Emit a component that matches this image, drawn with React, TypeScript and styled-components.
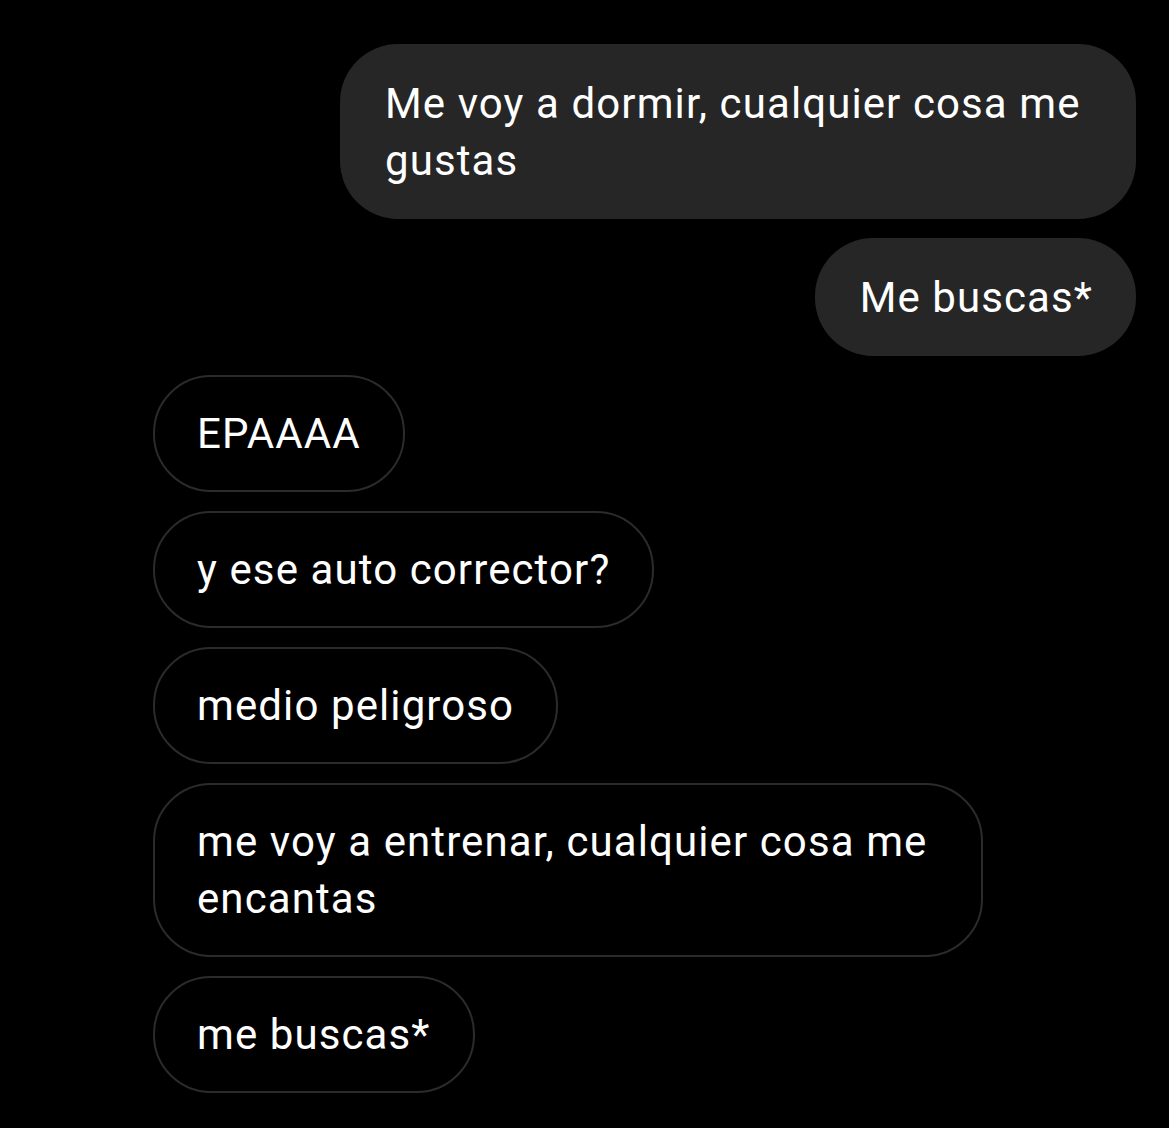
import styled, { createGlobalStyle } from 'styled-components'

const GlobalStyle = createGlobalStyle`
  html, body {
    margin: 0;
    padding: 0;
    background: #000;
  }

  body {
    font-family: Roboto, 'Liberation Sans', Arial, sans-serif;
    color: #fff;
    -webkit-font-smoothing: antialiased;
  }
`

type Message = {
  id: number
  text: string
  mine: boolean
}

const messages: Message[] = [
  { id: 1, text: 'Me voy a dormir, cualquier cosa me gustas', mine: true },
  { id: 2, text: 'Me buscas*', mine: true },
  { id: 3, text: 'EPAAAA', mine: false },
  { id: 4, text: 'y ese auto corrector?', mine: false },
  { id: 5, text: 'medio peligroso', mine: false },
  { id: 6, text: 'me voy a entrenar, cualquier cosa me encantas', mine: false },
  { id: 7, text: 'me buscas*', mine: false },
]

export default function App() {
  return (
    <>
      <GlobalStyle />
      <Thread>
        {messages.map(({ id, text, mine }) => (
          <Bubble key={id} mine={mine}>
            {text}
          </Bubble>
        ))}
      </Thread>
    </>
  )
}

const Thread = styled.div`
  width: 1169px;
  min-height: 1128px;
  box-sizing: border-box;
  padding: 44px 33px 0 153px;
  display: flex;
  flex-direction: column;
  gap: 19px;
  background: #000;
`

const Bubble = styled.div<{ mine: boolean }>`
  box-sizing: border-box;
  align-self: ${props => (props.mine ? 'flex-end' : 'flex-start')};
  max-width: ${props => (props.mine ? '796px' : '830px')};
  padding: ${props => (props.mine ? '31px 43px 30px 45px' : '28px 42px 28px 42px')};
  border: ${props => (props.mine ? 'none' : '2px solid #2b2b2b')};
  border-radius: 58px;
  background-color: ${props => (props.mine ? '#262626' : '#000')};
  font-size: 42px;
  line-height: 57px;
  letter-spacing: 1.1px;
`
